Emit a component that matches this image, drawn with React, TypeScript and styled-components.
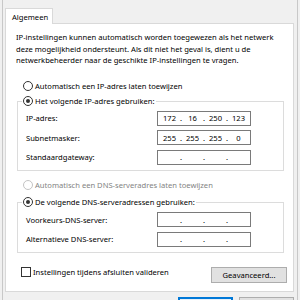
import React from "react";
import styled, { createGlobalStyle } from "styled-components";

const GlobalStyle = createGlobalStyle`
  html, body {
    margin: 0;
    padding: 0;
    background: #f0f0f0;
  }
  body {
    width: 300px;
    height: 300px;
    overflow: hidden;
    font-family: "Noto Sans", "Open Sans", sans-serif;
    font-size: 7.6px;
    color: #000;
  }
  * { box-sizing: border-box; }
`;

const Window = styled.div`
  width: 296px;
  height: 300px;
  margin-left: 2px;
  display: flex;
  flex-direction: column;
  padding: 8px 3px 0 2px;
  background: #f0f0f0;
  border-left: 1px solid #c8c8c8;
  border-right: 1px solid #c8c8c8;
`;

const TabStrip = styled.div`
  display: flex;
  height: 15px;
`;

const Tab = styled.div`
  position: relative;
  z-index: 1;
  width: 48px;
  height: 16px;
  padding-left: 6px;
  display: flex;
  align-items: center;
  background: #fff;
  border: 1px solid #d9d9d9;
  border-bottom: none;
`;

const Panel = styled.div`
  height: 269px;
  flex-shrink: 0;
  background: #fff;
  border: 1px solid #d9d9d9;
  display: flex;
  flex-direction: column;
  padding: 8px 0 0 0;
`;

const Intro = styled.p`
  margin: 0 0 0 10px;
  line-height: 11.5px;
  white-space: nowrap;
`;

const OptionRow = styled.label<{ $disabled?: boolean; $mt?: number }>`
  display: flex;
  align-items: center;
  gap: 2px;
  height: 15px;
  margin-top: ${(p) => p.$mt ?? 0}px;
  margin-left: 17px;
  color: ${(p) => (p.$disabled ? "#838383" : "#000")};
  white-space: nowrap;
`;

const Radio = styled.span<{ $checked?: boolean; $disabled?: boolean }>`
  width: 10px;
  height: 10px;
  border-radius: 50%;
  border: 1px solid ${(p) => (p.$disabled ? "#c4c4c4" : "#333")};
  background: #fff;
  display: flex;
  align-items: center;
  justify-content: center;
  flex-shrink: 0;
  &::after {
    content: "";
    display: ${(p) => (p.$checked ? "block" : "none")};
    width: 4px;
    height: 4px;
    border-radius: 50%;
    background: #333;
  }
`;

const Group = styled.fieldset<{ $mt?: number }>`
  margin: ${(p) => p.$mt ?? 0}px 9px 0 11px;
  padding: 0;
  border: 1px solid #dcdcdc;
  min-width: 0;
`;

const Legend = styled.legend`
  margin-left: 4px;
  padding: 0 1px;
  height: 15px;
  display: flex;
  align-items: center;
  gap: 2px;
  white-space: nowrap;
`;

const Fields = styled.div<{ $pt: number; $pb: number }>`
  display: grid;
  grid-template-columns: 131px 94px;
  row-gap: 4.5px;
  padding: ${(p) => p.$pt}px 0 ${(p) => p.$pb}px 8px;
  align-items: center;
`;

const FieldLabel = styled.span`
  white-space: nowrap;
`;

const IpBox = styled.div`
  height: 15px;
  border: 1px solid #7a7a7a;
  background: #fff;
  display: flex;
  align-items: center;
  padding-left: 1px;
`;

const Octet = styled.span`
  width: 21px;
  text-align: center;
`;

const Dot = styled.span`
  width: 2px;
  text-align: center;
`;

const Footer = styled.div`
  display: flex;
  align-items: flex-start;
  justify-content: space-between;
  margin: 14px 6px 0 15px;
  height: 16px;
`;

const CheckRow = styled.label`
  display: flex;
  align-items: center;
  gap: 2px;
  height: 10px;
`;

const CheckBox = styled.span`
  width: 10px;
  height: 10px;
  border: 1px solid #333;
  background: #fff;
`;

const Button = styled.button`
  width: 76px;
  height: 16px;
  padding: 0;
  font: inherit;
  color: #000;
  background: #e1e1e1;
  border: 1px solid #adadad;
`;

const DialogButtons = styled.div`
  display: flex;
  justify-content: flex-end;
  gap: 6px;
  margin-top: 5px;
`;

const DialogButton = styled.button<{ $primary?: boolean }>`
  width: 55px;
  height: 24px;
  padding: 0;
  background: ${(p) => (p.$primary ? "#e5f1fb" : "#e1e1e1")};
  border: ${(p) => (p.$primary ? "2px solid #0078d7" : "1px solid #adadad")};
`;

const IpField = ({ value }: { value?: string[] }) => {
  const parts = value ?? ["", "", "", ""];
  return (
    <IpBox>
      {parts.map((v, i) => (
        <React.Fragment key={i}>
          {i > 0 && <Dot>.</Dot>}
          <Octet>{v}</Octet>
        </React.Fragment>
      ))}
    </IpBox>
  );
};

export default function App() {
  return (
    <>
      <GlobalStyle />
      <Window>
        <TabStrip>
          <Tab>Algemeen</Tab>
        </TabStrip>
        <Panel>
          <Intro>
            IP-instellingen kunnen automatisch worden toegewezen als het netwerk
            <br />
            deze mogelijkheid ondersteunt. Als dit niet het geval is, dient u de
            <br />
            netwerkbeheerder naar de geschikte IP-instellingen te vragen.
          </Intro>
          <OptionRow $mt={12}>
            <Radio />
            Automatisch een IP-adres laten toewijzen
          </OptionRow>
          <Group>
            <Legend>
              <Radio $checked />
              Het volgende IP-adres gebruiken:
            </Legend>
            <Fields $pt={2} $pb={5}>
              <FieldLabel>IP-adres:</FieldLabel>
              <IpField value={["172", "16", "250", "123"]} />
              <FieldLabel>Subnetmasker:</FieldLabel>
              <IpField value={["255", "255", "255", "0"]} />
              <FieldLabel>Standaardgateway:</FieldLabel>
              <IpField />
            </Fields>
          </Group>
          <OptionRow $disabled $mt={7}>
            <Radio $disabled />
            Automatisch een DNS-serveradres laten toewijzen
          </OptionRow>
          <Group $mt={2}>
            <Legend>
              <Radio $checked />
              De volgende DNS-serveradressen gebruiken:
            </Legend>
            <Fields $pt={2.5} $pb={5}>
              <FieldLabel>Voorkeurs-DNS-server:</FieldLabel>
              <IpField />
              <FieldLabel>Alternatieve DNS-server:</FieldLabel>
              <IpField />
            </Fields>
          </Group>
          <Footer>
            <CheckRow>
              <CheckBox />
              Instellingen tijdens afsluiten valideren
            </CheckRow>
            <Button>Geavanceerd...</Button>
          </Footer>
        </Panel>
        <DialogButtons>
          <DialogButton $primary aria-label="OK" />
          <DialogButton aria-label="Annuleren" />
        </DialogButtons>
      </Window>
    </>
  );
}
